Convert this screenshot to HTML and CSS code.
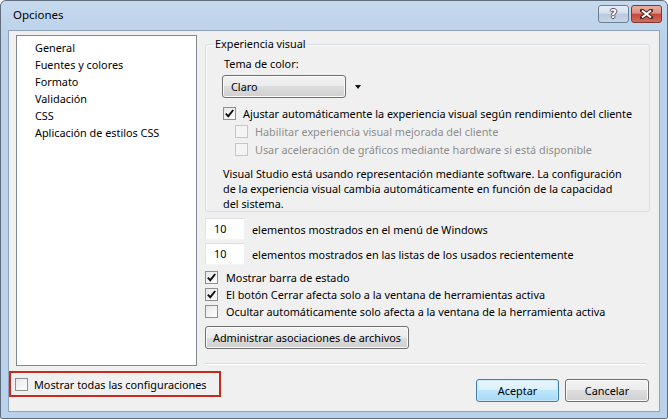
FILE: index.html
```html
<!DOCTYPE html>
<html lang="es">
<head>
<meta charset="utf-8">
<title>Opciones</title>
<link rel="stylesheet" href="styles.css">
</head>
<body>
<div class="window">
  <div class="titlebar">
    <span class="title">Opciones</span>
    <div class="caption">
      <span class="cap-btn help">?</span>
      <span class="cap-btn close"><svg width="13" height="10" viewBox="0 0 13 10"><path d="M2 1.5 L11 8.5 M11 1.5 L2 8.5" stroke="#4a2520" stroke-width="4" stroke-linecap="square" fill="none"/><path d="M2 1.5 L11 8.5 M11 1.5 L2 8.5" stroke="#fff" stroke-width="2" fill="none"/></svg></span>
    </div>
  </div>
  <div class="client">
    <div class="main">
      <ul class="tree">
        <li>General</li>
        <li>Fuentes y colores</li>
        <li>Formato</li>
        <li>Validación</li>
        <li>CSS</li>
        <li>Aplicación de estilos CSS</li>
      </ul>
      <div class="panel">
        <fieldset class="group">
          <legend>Experiencia visual</legend>
          <div class="group-body">
            <div class="label">Tema de color:</div>
            <div class="combo-row"><span class="combo">Claro</span><span class="arrow"></span></div>
            <div class="check-row top"><span class="cb"><svg width="11" height="11" viewBox="0 0 11 11"><path d="M1.8 5.6 L4.3 8.2 L9.2 2" stroke="#111" stroke-width="1.9" fill="none"/></svg></span><span>Ajustar automáticamente la experiencia visual según rendimiento del cliente</span></div>
            <div class="check-row sub disabled"><span class="cb"></span><span>Habilitar experiencia visual mejorada del cliente</span></div>
            <div class="check-row sub disabled"><span class="cb"></span><span>Usar aceleración de gráficos mediante hardware si está disponible</span></div>
            <p class="note">Visual Studio está usando representación mediante software. La configuración<br>de la experiencia visual cambia automáticamente en función de la capacidad<br>del sistema.</p>
          </div>
        </fieldset>
        <div class="num-row first"><span class="num">10</span><span>elementos mostrados en el menú de Windows</span></div>
        <div class="num-row"><span class="num">10</span><span>elementos mostrados en las listas de los usados recientemente</span></div>
        <div class="checks">
          <div class="check-row plain"><span class="cb"><svg width="11" height="11" viewBox="0 0 11 11"><path d="M1.8 5.6 L4.3 8.2 L9.2 2" stroke="#111" stroke-width="1.9" fill="none"/></svg></span><span>Mostrar barra de estado</span></div>
          <div class="check-row plain"><span class="cb"><svg width="11" height="11" viewBox="0 0 11 11"><path d="M1.8 5.6 L4.3 8.2 L9.2 2" stroke="#111" stroke-width="1.9" fill="none"/></svg></span><span>El botón Cerrar afecta solo a la ventana de herramientas activa</span></div>
          <div class="check-row plain"><span class="cb"></span><span>Ocultar automáticamente solo afecta a la ventana de la herramienta activa</span></div>
        </div>
        <span class="btn wide">Administrar asociaciones de archivos</span>
        <div class="separator"></div>
      </div>
    </div>
    <div class="footer">
      <div class="highlight"><span class="cb"></span><span>Mostrar todas las configuraciones</span></div>
      <div class="actions">
        <span class="btn default ok">Aceptar</span>
        <span class="btn cancel">Cancelar</span>
      </div>
    </div>
  </div>
</div>
</body>
</html>
```

FILE: styles.css
```css
html, body {
  margin: 0;
  padding: 0;
  background: #ffffff;
}

body {
  font-family: "Noto Sans", "Liberation Sans", sans-serif;
  font-size: 10.85px;
  color: #000;
}

.window {
  width: 668px;
  height: 419px;
  box-sizing: border-box;
  border: 1px solid #5f6d7c;
  border-radius: 6px 6px 2px 2px;
  background: linear-gradient(#c6d9ee, #b9d1ea 40px, #b9d1ea);
  padding: 0 7px 6px;
  display: flex;
  flex-direction: column;
}

.titlebar {
  height: 29px;
  flex: none;
  display: flex;
  justify-content: space-between;
  align-items: flex-start;
}

.title {
  margin: 6px 0 0 5px;
  line-height: 16px;
  font-size: 11.5px;
}

.caption {
  display: flex;
  gap: 2px;
  margin: 4px -2px 0 0;
}

.cap-btn {
  width: 31px;
  height: 18px;
  box-sizing: border-box;
  border: 1px solid #6f7f93;
  border-radius: 3px;
  display: flex;
  align-items: center;
  justify-content: center;
}

.help {
  background: linear-gradient(#e8eff8, #d3dfec 45%, #b8cadf 50%, #c6d6ea);
  color: #fff;
  font-family: "DejaVu Sans", sans-serif;
  font-weight: bold;
  font-size: 12px;
  line-height: 16px;
  text-shadow: 1px 0 0 #47566a, -1px 0 0 #47566a, 0 1px 0 #47566a, 0 -1px 0 #47566a;
}

.close {
  border-color: #7a3a33;
  background: linear-gradient(#e9aca0, #dc8f81 45%, #c5473a 50%, #d26a5e);
}

.client {
  flex: 1;
  border: 1px solid #8fa3bb;
  background: #f0f0f0;
  display: flex;
  flex-direction: column;
}

.main {
  display: flex;
  height: 331px;
  margin: 4px 9px 0 7px;
}

.tree {
  width: 181px;
  flex: none;
  box-sizing: border-box;
  border: 1px solid #828790;
  background: #fff;
  margin: 0;
  padding: 3px 0 0 18px;
  list-style: none;
}

.tree li {
  line-height: 17px;
}

.panel {
  flex: 1;
  margin-left: 8px;
  display: flex;
  flex-direction: column;
}

.group {
  margin: 1px 0 0;
  padding: 0 8px 0 8px;
  border: 1px solid #d5dfe5;
  border-radius: 3px;
  min-width: 0;
  box-shadow: inset 1px 1px 0 #fbfbfb;
}

.group legend {
  padding: 0 1px;
  line-height: 16px;
}

.group-body {
  padding-left: 8px;
}

.label {
  margin-top: 4px;
  line-height: 16px;
  padding-left: 2px;
}

.combo-row {
  margin-top: 3px;
  display: flex;
  align-items: center;
}

.combo {
  width: 124px;
  height: 23px;
  box-sizing: border-box;
  border: 1px solid #707070;
  border-radius: 3px;
  background: linear-gradient(#f2f2f2, #ebebeb 50%, #dddddd 50%, #cfcfcf);
  box-shadow: inset 0 0 0 1px #fafafa;
  padding-left: 8px;
  line-height: 21px;
}

.arrow {
  width: 0;
  height: 0;
  border-left: 3.5px solid transparent;
  border-right: 3.5px solid transparent;
  border-top: 4px solid #111;
  margin: 1px 0 0 9px;
}

.check-row {
  display: flex;
  align-items: center;
  height: 18px;
  padding-left: 1px;
}

.check-row.top {
  margin-top: 6px;
}

.check-row.sub {
  padding-left: 13px;
}

.check-row .cb {
  margin-right: 7px;
}

.disabled {
  color: #8d8d8d;
}

.cb {
  width: 13px;
  height: 13px;
  flex: none;
  box-sizing: border-box;
  border: 1px solid #8e8f8f;
  background: linear-gradient(135deg, #e6e7e9, #ffffff);
  display: flex;
  align-items: center;
  justify-content: center;
}

.disabled .cb {
  border-color: #c6c6c6;
  background: #f4f4f4;
}

.note {
  margin: 8px 0 0;
  line-height: 15px;
  padding-left: 1px;
}

.num-row {
  display: flex;
  align-items: center;
  margin-top: 3px;
}

.num-row.first {
  margin-top: 6px;
}

.num {
  width: 40px;
  height: 22px;
  box-sizing: border-box;
  background: #fff;
  border: 1px solid;
  border-color: #dcdfe4 #eef0f2 #f4f4f4 #e4e6ea;
  padding-left: 8px;
  line-height: 20px;
  margin-right: 7px;
}

.checks {
  margin-top: 4px;
}

.check-row.plain {
  height: 17px;
  padding-left: 0;
}

.check-row.plain .cb {
  margin-right: 8px;
}

.btn {
  height: 23px;
  box-sizing: border-box;
  border: 1px solid #707070;
  border-radius: 3px;
  background: linear-gradient(#f2f2f2, #ebebeb 50%, #dddddd 50%, #cfcfcf);
  box-shadow: inset 0 0 0 1px #fbfbfb;
  display: flex;
  align-items: center;
  justify-content: center;
}

.btn.wide {
  width: 204px;
  margin-top: 6px;
  align-self: flex-start;
}

.btn.default {
  border-color: #3c7fb1;
  background: linear-gradient(#eaf6fd, #d9f0fc 50%, #bee6fd 50%, #a7d9f5);
  box-shadow: inset 0 0 0 1px #cbe8f9;
}

.separator {
  margin: auto 4px 1px 0;
  border-top: 1px solid #d5dfe5;
  border-bottom: 1px solid #ffffff;
}

.footer {
  flex: 1;
  display: flex;
  justify-content: space-between;
  align-items: flex-start;
}

.highlight {
  margin-top: 5px;
  width: 212px;
  height: 26px;
  box-sizing: border-box;
  border: 2px solid #c42b1c;
  display: flex;
  align-items: center;
  padding-left: 4px;
}

.highlight .cb {
  margin-right: 6px;
}

.actions {
  display: flex;
  gap: 6px;
  margin: 13px 10px 0 0;
}

.ok {
  width: 83px;
}

.cancel {
  width: 84px;
}
```
